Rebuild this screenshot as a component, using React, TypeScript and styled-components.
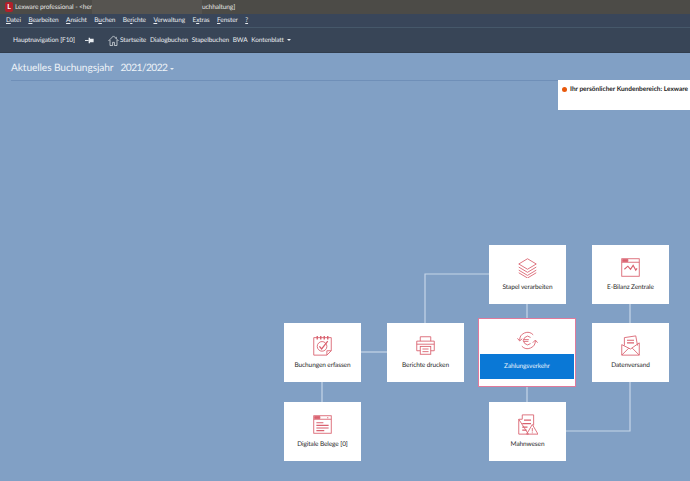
import React from 'react';
import styled, { createGlobalStyle } from 'styled-components';

const GlobalStyle = createGlobalStyle`
  html, body, #root {
    margin: 0;
    padding: 0;
    height: 100%;
  }
  body {
    overflow: hidden;
    font-family: Lato, "Open Sans", "Liberation Sans", sans-serif;
    text-rendering: geometricPrecision;
    letter-spacing: -0.1px;
  }
`;

const Page = styled.div`
  width: 690px;
  height: 481px;
  display: flex;
  flex-direction: column;
  background: #81a0c5;
  overflow: hidden;
`;

/* Window chrome */
const TitleBar = styled.div`
  height: 14px;
  flex: none;
  display: flex;
  align-items: center;
  padding-left: 5px;
  background: #4c4b47;
  color: #e4e4e2;
  font-size: 6.6px;
  white-space: nowrap;
`;

const AppLogo = styled.div`
  width: 8px;
  height: 10px;
  margin-right: 2px;
  border-radius: 2px;
  background: #b2202a;
  color: #fff;
  font-size: 7px;
  font-weight: 700;
  line-height: 10px;
  text-align: center;
`;

const TitleStart = styled.span`
  width: 77px;
`;

const Redacted = styled.span`
  width: 110px;
  height: 14px;
  background: #565450;
`;

const MenuBar = styled.div`
  height: 13px;
  flex: none;
  display: flex;
  align-items: center;
  gap: 7.5px;
  padding-left: 6px;
  background: #39465a;
  border-bottom: 1px solid #46586a;
  color: #e8ecf0;
  font-size: 6.5px;
`;

const Accel = styled.span`
  text-decoration: underline;
`;

const NavBar = styled.div`
  height: 25px;
  flex: none;
  display: flex;
  align-items: center;
  padding-left: 13px;
  background: #384557;
  border-bottom: 1px solid #313d4d;
  box-sizing: border-box;
  color: #e8ecf0;
  font-size: 6.5px;
  white-space: nowrap;
`;

const NavToggle = styled.span`
  width: 61px;
`;

const PinIcon = styled.svg`
  width: 10px;
  height: 7px;
  margin: 0 13px 0 11px;
`;

const HomeIcon = styled.svg`
  width: 11px;
  height: 11px;
  margin-right: 1px;
`;

const NavLinks = styled.div`
  display: flex;
  align-items: center;
  gap: 3.7px;
`;

const Caret = styled.span`
  display: inline-block;
  width: 0;
  height: 0;
  margin-left: 3px;
  vertical-align: 1px;
  border-style: solid;
  border-width: 2px 2px 0 2px;
  border-color: #e8ecf0 transparent transparent transparent;
`;

/* Work area */
const Main = styled.main`
  position: relative;
  flex: 1;
`;

const YearHeader = styled.div`
  height: 27px;
  margin-left: 11px;
  display: flex;
  align-items: flex-end;
  gap: 7px;
  border-bottom: 1px solid #6f8fb8;
  color: #eef3f8;
  font-size: 10.2px;
  line-height: 24px;
`;

const YearValue = styled.span`
  letter-spacing: -0.55px;
`;

const Notice = styled.div`
  position: absolute;
  top: 27px;
  right: 0;
  width: 132px;
  height: 30px;
  display: flex;
  align-items: flex-start;
  gap: 3px;
  padding: 6px 0 0 4px;
  box-sizing: border-box;
  background: #fff;
  color: #1c1c1c;
  font-size: 6.5px;
  font-weight: 700;
  letter-spacing: 0;
  white-space: nowrap;
`;

const NoticeDot = styled.span`
  flex: none;
  width: 5px;
  height: 5px;
  margin-top: 1px;
  border-radius: 50%;
  background: #e8590c;
`;

const Wires = styled.svg`
  position: absolute;
  inset: 0;
  width: 100%;
  height: 100%;
`;

const Node = styled.div<{ $x: number; $y: number }>`
  position: absolute;
  left: ${p => p.$x}px;
  top: ${p => p.$y}px;
  width: 77px;
  height: 59px;
  display: flex;
  flex-direction: column;
  align-items: center;
  padding-top: 12px;
  box-sizing: border-box;
  background: #fff;
  color: #2a2a2a;
  font-size: 6.5px;
`;

const ActiveNode = styled.div`
  position: absolute;
  left: 478px;
  top: 265px;
  width: 98px;
  height: 69px;
  display: flex;
  flex-direction: column;
  align-items: center;
  padding-top: 11px;
  box-sizing: border-box;
  background: #fff;
  border: 1px solid #e07a9c;
`;

const ActiveLabel = styled.div`
  align-self: stretch;
  height: 25px;
  margin: 3px 1px 0;
  display: flex;
  align-items: center;
  justify-content: center;
  background: #0a78d6;
  color: #e6f1fb;
  font-size: 6.5px;
`;

const NodeIcon = styled.svg`
  width: 21px;
  height: 21px;
  flex: none;
  fill: none;
  stroke: #d9616f;
  stroke-width: 1;
`;

const NodeLabel = styled.div`
  margin-top: 6px;
  white-space: nowrap;
`;

const StackIcon = () => (
  <NodeIcon viewBox="0 0 24 24">
    <path d="M12 2 L22 8 L12 14 L2 8 Z" />
    <path d="M2 11.5 L12 17.5 L22 11.5" />
    <path d="M2 15 L12 21 L22 15" />
    <path d="M2 18 L12 24 L22 18" />
  </NodeIcon>
);

const BalanceIcon = () => (
  <NodeIcon viewBox="0 0 24 24">
    <rect x="2" y="2" width="20" height="20" />
    <path d="M2 6 H22" />
    <path d="M3 2.8 H9 V5.2 H3 Z" fill="#d9616f" />
    <path d="M5 14 L9 10.5 L12 14 L15 9.5 L18 15 L19.5 13" strokeWidth="1.3" />
  </NodeIcon>
);

const ReceiptPadIcon = () => (
  <NodeIcon viewBox="0 0 24 24">
    <path d="M2 3 H22 V18 L17 23 H2 Z" />
    <path d="M17 23 V18 H22" />
    <path d="M6 1 V5 M10 1 V5 M14 1 V5 M18 1 V5" strokeWidth="1.6" />
    <circle cx="11.5" cy="13" r="5.5" />
    <path d="M8.5 13 L11 16 L18 7" strokeWidth="1.4" />
  </NodeIcon>
);

const PrinterIcon = () => (
  <NodeIcon viewBox="0 0 24 24">
    <path d="M6 7 V2 H18 V7" />
    <path d="M6 18 H2 V7 H22 V18 H18" />
    <rect x="6" y="13" width="12" height="9" />
    <path d="M2 10.5 H22" />
    <path d="M8.5 16 H15.5 M8.5 19 H15.5" />
  </NodeIcon>
);

const PaymentIcon = () => (
  <NodeIcon viewBox="0 0 24 24">
    <path d="M3 12 A9 9 0 0 1 18.5 5.5" />
    <path d="M21 12 A9 9 0 0 1 5.5 18.5" />
    <path d="M0.5 9.5 L3 12.5 L6 10" />
    <path d="M18 14.5 L21 11.5 L23.5 14.5" />
    <path d="M15.5 8.5 A4.8 4.8 0 1 0 15.5 15.5" />
    <path d="M7.5 11 H13.5 M7.5 13 H13" />
  </NodeIcon>
);

const MailIcon = () => (
  <NodeIcon viewBox="0 0 24 24">
    <path d="M5 12 V3 L18 1 L20 12" />
    <path d="M8 6 H16 M8 9 H16" strokeWidth="1.3" />
    <path d="M2 11 V23 H22 V9 L12 16 Z" />
    <path d="M2 23 L10 15 M22 23 L14 15" />
  </NodeIcon>
);

const DocumentsIcon = () => (
  <NodeIcon viewBox="0 0 24 24">
    <rect x="2" y="2" width="20" height="20" />
    <path d="M2 6 H22" />
    <path d="M3 2.8 H9 V5.2 H3 Z" fill="#d9616f" />
    <path d="M18 3.5 V5" />
    <path d="M5 10 H13 M5 13 H19 M5 16 H19 M5 19 H14" strokeWidth="1.3" />
  </NodeIcon>
);

const DunningIcon = () => (
  <NodeIcon viewBox="0 0 24 24">
    <path d="M6 1 H19 V13 M13 23 H2 V6 Z" />
    <path d="M2 6 H6 V1" />
    <path d="M8 7 H16 M6 11 H16 M6 15 H12 M6 18.5 H11" strokeWidth="1.3" />
    <path d="M17.5 12 L24 23 H11 Z" />
    <path d="M17.5 16 V20 M17.5 21 V22" />
  </NodeIcon>
);

const wires = [
  'M489 221 H425 V270',
  'M527 251 V265',
  'M527 334 V349',
  'M630 251 V270',
  'M630 329 V378 H566',
  'M360 299 H387',
  'M322 329 V349',
];

const nodes = [
  { x: 489, y: 192, label: 'Stapel verarbeiten', icon: <StackIcon /> },
  { x: 592, y: 192, label: 'E-Bilanz Zentrale', icon: <BalanceIcon /> },
  { x: 284, y: 270, label: 'Buchungen erfassen', icon: <ReceiptPadIcon /> },
  { x: 387, y: 270, label: 'Berichte drucken', icon: <PrinterIcon /> },
  { x: 592, y: 270, label: 'Datenversand', icon: <MailIcon /> },
  { x: 284, y: 349, label: 'Digitale Belege [0]', icon: <DocumentsIcon /> },
  { x: 489, y: 349, label: 'Mahnwesen', icon: <DunningIcon /> },
];

export default function App() {
  return (
    <Page>
      <GlobalStyle />
      <TitleBar>
        <AppLogo>L</AppLogo>
        <TitleStart>Lexware professional - &lt;her</TitleStart>
        <Redacted />
        uchhaltung]
      </TitleBar>
      <MenuBar>
        <span><Accel>D</Accel>atei</span>
        <span><Accel>B</Accel>earbeiten</span>
        <span><Accel>A</Accel>nsicht</span>
        <span>B<Accel>u</Accel>chen</span>
        <span>Be<Accel>r</Accel>ichte</span>
        <span><Accel>V</Accel>erwaltung</span>
        <span>E<Accel>x</Accel>tras</span>
        <span><Accel>F</Accel>enster</span>
        <span><Accel>?</Accel></span>
      </MenuBar>
      <NavBar>
        <NavToggle>Hauptnavigation [F10]</NavToggle>
        <PinIcon viewBox="0 0 11 7">
          <path d="M0 3.5 H4" stroke="#e8ecf0" strokeWidth="1" />
          <path d="M4 0.5 H5.5 V1.5 H9.5 V5.5 H5.5 V6.5 H4 Z" fill="#e8ecf0" />
        </PinIcon>
        <HomeIcon viewBox="0 0 12 12" fill="none" stroke="#e8ecf0" strokeWidth="0.8">
          <path d="M0.5 6.5 L6 1 L11.5 6.5" />
          <path d="M2.2 5.5 V11.5 H5 V8 H7 V11.5 H9.8 V5.5" />
          <path d="M9 2 V4" />
        </HomeIcon>
        <NavLinks>
          <span>Startseite</span>
          <span>Dialogbuchen</span>
          <span>Stapelbuchen</span>
          <span>BWA</span>
          <span>Kontenblatt<Caret /></span>
        </NavLinks>
      </NavBar>
      <Main>
        <YearHeader>
          <span>Aktuelles Buchungsjahr</span>
          <YearValue>2021/2022<Caret /></YearValue>
        </YearHeader>
        <Notice>
          <NoticeDot />
          Ihr persönlicher Kundenbereich: Lexware
        </Notice>
        <Wires viewBox="0 0 690 428" fill="none" stroke="#c6d5e8" strokeWidth="1.2">
          {wires.map(d => <path key={d} d={d} />)}
        </Wires>
        {nodes.map(n => (
          <Node key={n.label} $x={n.x} $y={n.y}>
            {n.icon}
            <NodeLabel>{n.label}</NodeLabel>
          </Node>
        ))}
        <ActiveNode>
          <PaymentIcon />
          <ActiveLabel>Zahlungsverkehr</ActiveLabel>
        </ActiveNode>
      </Main>
    </Page>
  );
}
